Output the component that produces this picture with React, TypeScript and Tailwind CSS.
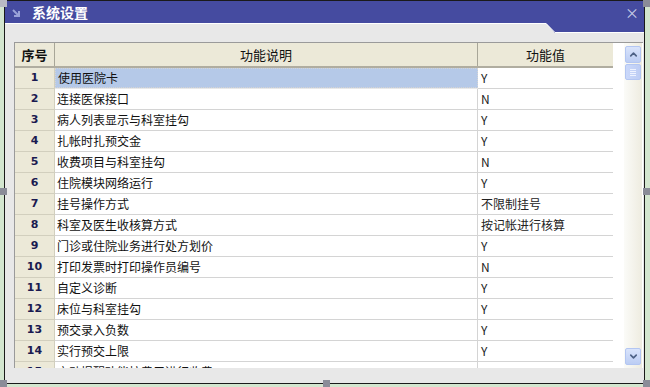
import { ChevronUp, ChevronDown } from 'lucide-react';

const rows = [
    { no: 1, name: '使用医院卡', value: 'Y' },
    { no: 2, name: '连接医保接口', value: 'N' },
    { no: 3, name: '病人列表显示与科室挂勾', value: 'Y' },
    { no: 4, name: '扎帐时扎预交金', value: 'Y' },
    { no: 5, name: '收费项目与科室挂勾', value: 'N' },
    { no: 6, name: '住院模块网络运行', value: 'Y' },
    { no: 7, name: '挂号操作方式', value: '不限制挂号' },
    { no: 8, name: '科室及医生收核算方式', value: '按记帐进行核算' },
    { no: 9, name: '门诊或住院业务进行处方划价', value: 'Y' },
    { no: 10, name: '打印发票时打印操作员编号', value: 'N' },
    { no: 11, name: '自定义诊断', value: 'Y' },
    { no: 12, name: '床位与科室挂勾', value: 'Y' },
    { no: 13, name: '预交录入负数', value: 'Y' },
    { no: 14, name: '实行预交上限', value: 'Y' },
    { no: 15, name: '启动提醒功能按费用进行收费', value: 'Y' },
];

const cjk = "font-['Noto_Sans_CJK_SC','Noto_Sans',sans-serif]";

function Handle({ className }: { className: string }) {
    return <div className={`absolute w-[7px] h-[7px] bg-[#8a8c98] ${className}`} />;
}

export default function App() {
    return (
        <div className={`relative w-[650px] h-[387px] overflow-hidden bg-[#d3e6cf] ${cjk}`}>
            <div className="ml-[4px] w-[641px] h-[384px] border border-[#1a1a1a] flex flex-col bg-[#e8e8e8]">
                {/* title bar */}
                <div className="relative h-[22px] bg-[#454ba0] flex items-center">
                    <svg width="10" height="10" viewBox="0 0 10 10" className="ml-[7px] mt-[2px]">
                        <path d="M1 2 L7 8 M7 3 L7 8 L2 8" stroke="#9aa2d8" strokeWidth="2" fill="none" />
                    </svg>
                    <span className="ml-[10px] text-[14px] font-bold text-white leading-none">系统设置</span>
                    <span className="ml-auto mr-[5px] text-[14px] leading-none text-[#c8cbe6]">×</span>
                    <svg width="98" height="11" viewBox="0 0 98 11" className="absolute right-0 top-[22px]">
                        <polygon points="0,0 98,0 98,10 9,10" fill="#454ba0" />
                        <polyline points="0,0.5 9,9.5 98,9.5" stroke="#ffffff" strokeWidth="1" fill="none" />
                    </svg>
                </div>
                <div className="h-px bg-white mr-[98px]" />

                {/* grid */}
                <div className="pl-[9px] pr-px pt-[18px]">
                    <div className="flex h-[326px] border-l border-t border-[#9a9a9a] overflow-hidden">
                        <div className="w-[598px] flex flex-col">
                            <div className="flex h-[25px] shrink-0 bg-[#ece9d8] border-b-2 border-[#b0ada0] text-[13px] text-[#111]">
                                <div className="w-[40px] border-r border-[#a8a698] flex items-center justify-center font-bold">序号</div>
                                <div className="w-[423px] border-r border-[#a8a698] flex items-center justify-center">功能说明</div>
                                <div className="flex-1 flex items-center justify-center">功能值</div>
                            </div>
                            {rows.map((r) => (
                                <div key={r.no} className="flex h-[21px] shrink-0 text-[12px] text-[#111]">
                                    <div className="w-[40px] bg-[#ece9d8] border-r border-b border-[#d2cfbe] flex items-center justify-center font-['DejaVu_Sans',sans-serif] font-bold text-[11px] text-[#1a1a50]">
                                        {r.no}
                                    </div>
                                    <div
                                        className={`w-[423px] border-r border-b border-[#d4d4d4] flex items-center pl-[2px] ${
                                            r.no === 1 ? 'bg-[#b5c9e8] border border-dotted border-[#555] h-[20px]' : 'bg-white'
                                        }`}
                                    >
                                        {r.name}
                                    </div>
                                    <div className="flex-1 bg-white border-b border-[#d4d4d4] flex items-center pl-[3px] text-[#222]">
                                        {r.value}
                                    </div>
                                </div>
                            ))}
                        </div>

                        {/* scrollbar */}
                        <div className="w-[30px] bg-white flex">
                            <div className="ml-[11px] w-[18px] bg-gradient-to-r from-[#fbfbf8] to-[#eeece0] flex flex-col items-center pt-[3px] pb-[3px]">
                                <div className="w-[16px] h-[17px] rounded-[2px] border border-[#b3c6f2] bg-gradient-to-b from-[#d9e4fb] to-[#bccdf4] flex items-center justify-center">
                                    <ChevronUp size={11} strokeWidth={3.5} className="text-[#4d6185]" />
                                </div>
                                <div className="mt-px w-[16px] h-[16px] rounded-[2px] border border-[#b3c6f2] bg-gradient-to-r from-[#cad8fa] to-[#bdcdf4] flex flex-col items-center justify-center gap-px">
                                    <div className="w-[6px] h-px bg-[#eef3ff]" />
                                    <div className="w-[6px] h-px bg-[#eef3ff]" />
                                    <div className="w-[6px] h-px bg-[#eef3ff]" />
                                    <div className="w-[6px] h-px bg-[#eef3ff]" />
                                </div>
                                <div className="flex-1" />
                                <div className="w-[16px] h-[17px] rounded-[2px] border border-[#b3c6f2] bg-gradient-to-b from-[#d9e4fb] to-[#bccdf4] flex items-center justify-center">
                                    <ChevronDown size={11} strokeWidth={3.5} className="text-[#4d6185]" />
                                </div>
                            </div>
                        </div>
                    </div>
                </div>
            </div>

            <Handle className="left-0 top-0 w-[5px] h-[5px] bg-[#b8bac4]" />
            <Handle className="right-0 top-0 w-[5px] h-[5px]" />
            <Handle className="left-0 top-[188px]" />
            <Handle className="right-0 top-[188px] w-[4px]" />
            <Handle className="left-0 bottom-0" />
            <Handle className="left-[323px] bottom-0" />
            <Handle className="right-0 bottom-0 w-[5px]" />
        </div>
    );
}
